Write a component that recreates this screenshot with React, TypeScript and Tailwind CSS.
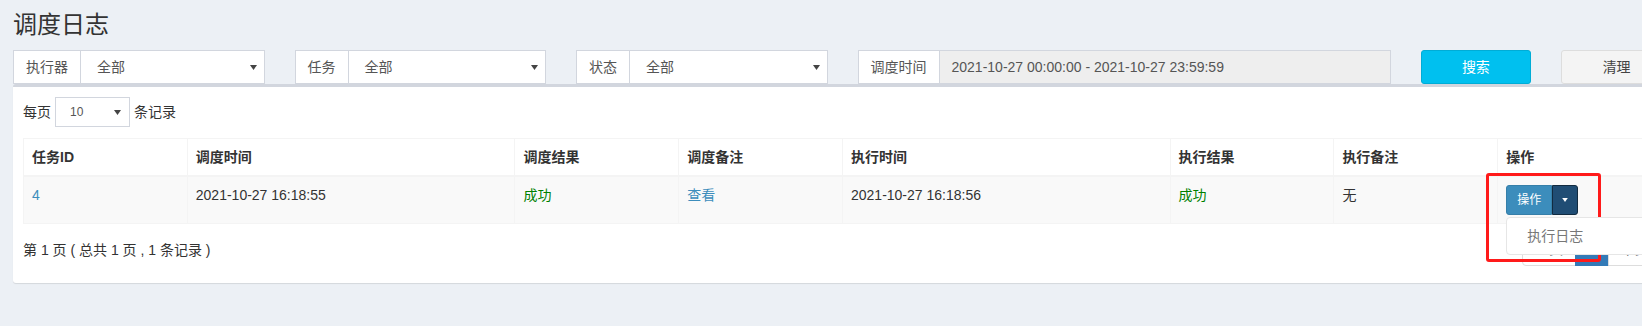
import React from "react";

function Caret({ color = "#444", w = 7, h = 5 }: { color?: string; w?: number; h?: number }) {
  return (
    <svg width={w} height={h} viewBox="0 0 7 5" className="shrink-0">
      <path d="M0 0h7L3.5 5z" fill={color} />
    </svg>
  );
}

function Pick({ label, value = "全部" }: { label: string; value?: string }) {
  return (
    <div className="flex h-[34px] w-[251.5px] shrink-0">
      <span className="flex items-center border border-[#d2d6de] bg-white px-[12px] text-[#555]">{label}</span>
      <div className="flex flex-1 items-center justify-between border border-l-0 border-[#d2d6de] bg-white pl-[16px] pr-[7px] text-[#555]">
        <span>{value}</span>
        <Caret />
      </div>
    </div>
  );
}

const heads = ["任务ID", "调度时间", "调度结果", "调度备注", "执行时间", "执行结果", "执行备注", "操作"];
const widths = ["w-[10%]", "w-[20%]", "w-[10%]", "w-[10%]", "w-[20%]", "w-[10%]", "w-[10%]", "w-[10%]"];

export default function App() {
  return (
    <div className="relative h-[326px] w-[1642px] overflow-hidden bg-[#ecf0f5] font-['Liberation_Sans','Noto_Sans_CJK_SC',sans-serif] text-[14px] leading-[20px] text-[#333]">
      <div className="pl-[13px] pt-[12px]">
        <h1 className="text-[24px] font-normal leading-[26px] text-[#333]">调度日志</h1>

        {/* filters */}
        <div className="mt-[12px] flex gap-[30px]">
          <Pick label="执行器" />
          <Pick label="任务" />
          <Pick label="状态" />
          <div className="flex h-[34px] w-[533px] shrink-0">
            <span className="flex items-center border border-[#d2d6de] bg-white px-[12px] text-[#555]">调度时间</span>
            <div className="flex flex-1 items-center border border-l-0 border-[#d2d6de] bg-[#eee] px-[12px] text-[#555]">
              2021-10-27 00:00:00 - 2021-10-27 23:59:59
            </div>
          </div>
          <button className="h-[34px] w-[110.75px] shrink-0 rounded-[3px] border border-[#00acd6] bg-[#00c0ef] text-white">搜索</button>
          <button className="h-[34px] w-[110.75px] shrink-0 rounded-[3px] border border-[#ddd] bg-[#f4f4f4] text-[#444]">清理</button>
        </div>

        {/* box */}
        <div className="w-[1659px] rounded-[3px] border-t-[3px] border-[#d2d6de] bg-white px-[10px] pb-[17px] pt-[10px] shadow-[0_1px_1px_rgba(0,0,0,0.1)]">
          <div className="flex items-center gap-[4px]">
            <span>每页</span>
            <div className="flex h-[30px] w-[75px] items-center justify-between border border-[#d2d6de] pl-[14px] pr-[8px] text-[12px] text-[#555]">
              <span>10</span>
              <Caret />
            </div>
            <span>条记录</span>
          </div>

          <table className="mt-[11px] w-full table-fixed border-collapse">
            <thead>
              <tr>
                {heads.map((h, i) => (
                  <th key={h} className={`${widths[i]} border border-b-2 border-[#f4f4f4] p-[8px] text-left font-bold`}>
                    {h}
                  </th>
                ))}
              </tr>
            </thead>
            <tbody>
              <tr className="bg-[#f9f9f9]">
                <td className="border border-[#f4f4f4] p-[8px] align-top text-[#3c8dbc]">4</td>
                <td className="border border-[#f4f4f4] p-[8px] align-top">2021-10-27 16:18:55</td>
                <td className="border border-[#f4f4f4] p-[8px] align-top text-[#008000]">成功</td>
                <td className="border border-[#f4f4f4] p-[8px] align-top text-[#3c8dbc]">查看</td>
                <td className="border border-[#f4f4f4] p-[8px] align-top">2021-10-27 16:18:56</td>
                <td className="border border-[#f4f4f4] p-[8px] align-top text-[#008000]">成功</td>
                <td className="border border-[#f4f4f4] p-[8px] align-top">无</td>
                <td className="border border-[#f4f4f4] p-[8px] align-top">
                  <div className="relative inline-flex">
                    <button className="h-[30px] rounded-l-[3px] border border-[#367fa9] bg-[#3c8dbc] px-[10px] text-[12px] text-white">操作</button>
                    <button className="flex h-[30px] items-center rounded-r-[3px] border border-[#122b40] bg-[#204d74] px-[8px]">
                      <Caret color="#fff" w={8} h={4} />
                    </button>
                    <div className="absolute left-0 top-full z-10 mt-[2px] w-[160px] rounded-[4px] border border-[#e6e6e6] bg-white py-[5px]">
                      <div className="px-[20px] py-[3px] text-[#777]">执行日志</div>
                    </div>
                  </div>
                </td>
              </tr>
            </tbody>
          </table>

          <div className="mt-[6px] flex items-start justify-between">
            <div className="pt-[10px]">第 1 页 ( 总共 1 页 , 1 条记录 )</div>
            <ul className="mt-[2px] flex">
              <li className="rounded-l-[4px] border border-[#ddd] bg-white px-[12px] py-[6px] text-[#777]">上页</li>
              <li className="-ml-px border border-[#337ab7] bg-[#337ab7] px-[12px] py-[6px] text-white">1</li>
              <li className="-ml-px rounded-r-[4px] border border-[#ddd] bg-white px-[12px] py-[6px] text-[#777]">下页</li>
            </ul>
          </div>
        </div>
      </div>

      {/* annotation */}
      <div className="absolute left-[1486px] top-[173px] h-[89px] w-[115px] rounded-[3px] border-[3px] border-[#ff1a1a]" />
    </div>
  );
}
